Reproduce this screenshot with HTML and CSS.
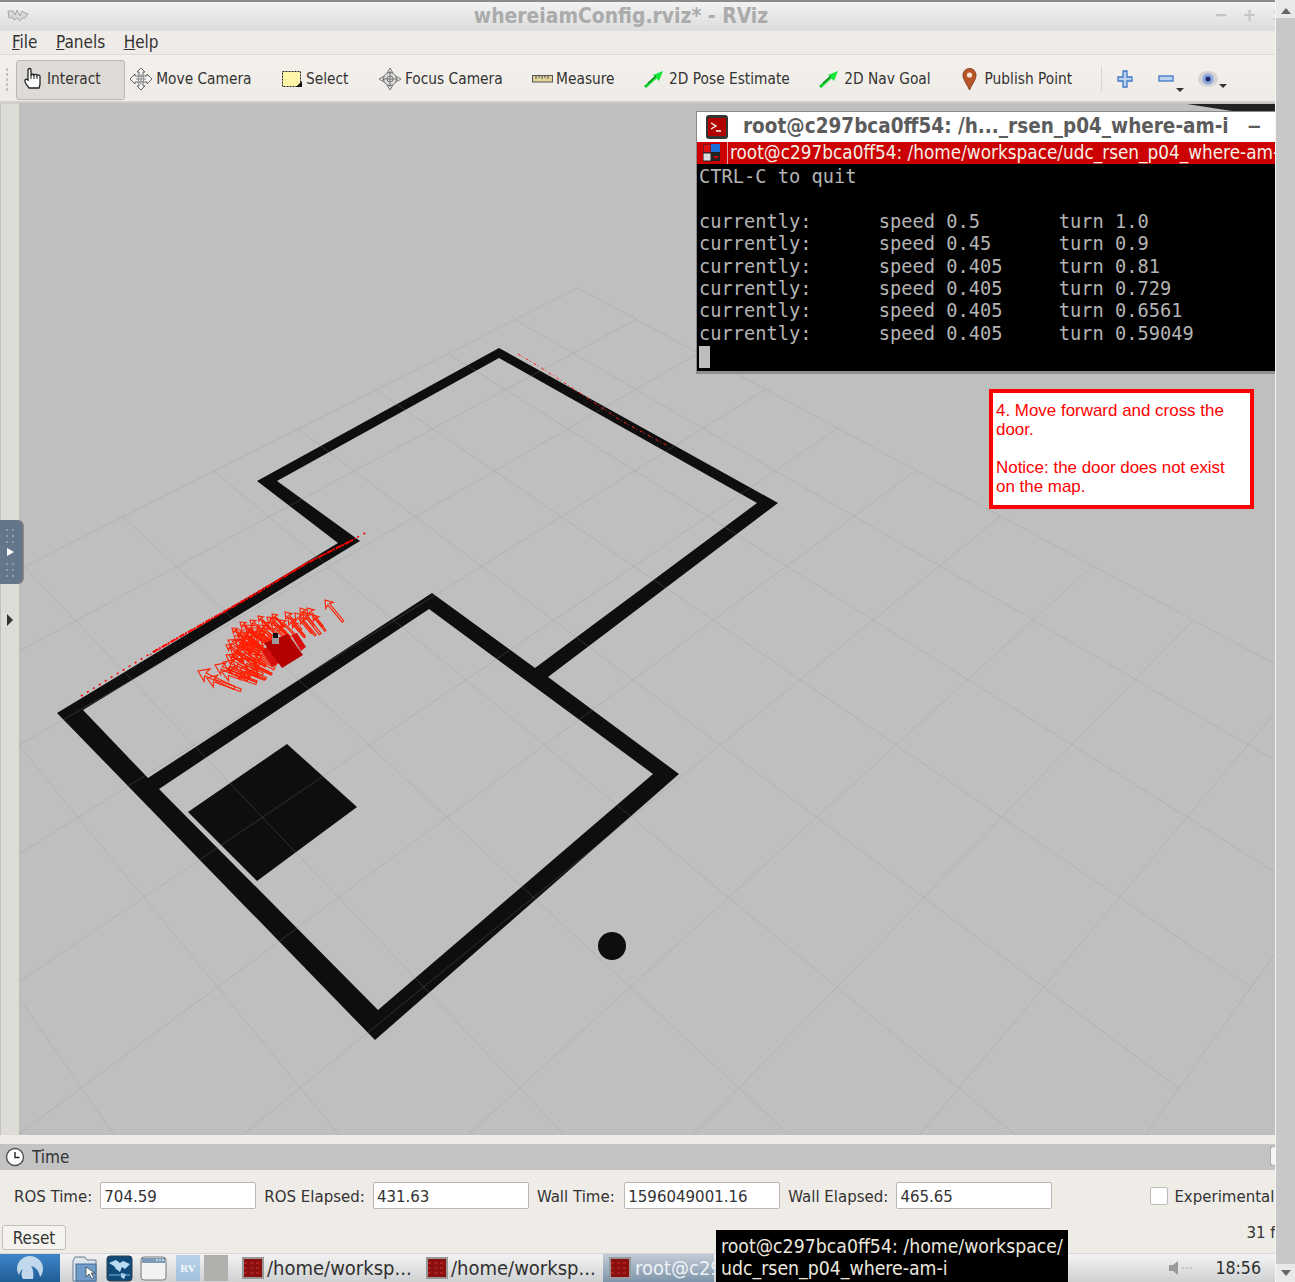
FILE: index.html
```html
<!DOCTYPE html>
<html lang="en">
<head>
<meta charset="utf-8">
<title>whereiamConfig.rviz* - RViz</title>
<link rel="stylesheet" href="styles.css">
</head>
<body>
<div class="screen">
  <div class="desktop">
    <header class="titlebar">
      <svg class="app-logo" width="24" height="16" viewBox="0 0 24 16"><path d="M1 3h5l2 4 2-5 3 6 2-5 3 2 3 1-3 4h-3l-2 3-3-3-3 2-2-3-3 1z" fill="#d8d8d8" stroke="#a5a5a5"/></svg>
      <span class="title-text">whereiamConfig.rviz* - RViz</span>
      <span class="win-btns"><span>−</span><span>+</span><span>×</span></span>
    </header>
    <nav class="menubar">
      <span><u>F</u>ile</span><span><u>P</u>anels</span><span><u>H</u>elp</span>
    </nav>
    <div class="toolbar">
      <span class="grip"></span>
      <div class="tool tool-active">
        <svg width="24" height="26" viewBox="0 0 24 26"><path d="M7 22c-2-3-5-6-4-8 1-1 2-1 3 0V4c0-2 3-2 3 0v5c1-1 3-1 3 0 1-1 3-1 3 .5 1-1 3-.5 3 1V18c0 2-1 3-1 4z" fill="#fff" stroke="#222" stroke-width="1.3"/><path d="M9 9v4M12 9v4M15 9.5V13" stroke="#222" fill="none"/></svg>
        <span>Interact</span>
      </div>
      <div class="tool">
        <svg width="24" height="24" viewBox="0 0 24 24"><path d="M12 1l4 4h-2v4h4V7l5 5-5 5v-2h-4v4h2l-4 4-4-4h2v-4H6v2l-5-5 5-5v2h4V5H8z" fill="#f2f2f2" stroke="#666"/><path d="M12 7v10M7 12h10" stroke="#888"/><circle cx="12" cy="12" r="3" fill="none" stroke="#888"/></svg>
        <span>Move Camera</span>
      </div>
      <div class="tool">
        <svg width="22" height="20" viewBox="0 0 22 20"><rect x="1.5" y="2.5" width="18" height="15" fill="#fdf6a8" stroke="#222" stroke-dasharray="2 1"/><path d="M15 18h6v-6z" fill="#111"/></svg>
        <span>Select</span>
      </div>
      <div class="tool">
        <svg width="24" height="24" viewBox="0 0 24 24"><path d="M12 1l3 5H9zM12 23l-3-5h6zM1 12l5-3v6zM23 12l-5 3V9z" fill="#e8e8e8" stroke="#777"/><circle cx="12" cy="12" r="6.5" fill="#d9d9d9" stroke="#777"/><path d="M12 4v16M4 12h16" stroke="#777"/><circle cx="12" cy="12" r="3" fill="none" stroke="#777"/></svg>
        <span>Focus Camera</span>
      </div>
      <div class="tool">
        <svg width="21" height="10" viewBox="0 0 21 10"><rect x=".5" y="1.5" width="20" height="6.5" fill="#e0d49a" stroke="#555"/><path d="M4 2v3M7 2v2M10 2v3M13 2v2M16 2v3" stroke="#555"/></svg>
        <span>Measure</span>
      </div>
      <div class="tool">
        <svg class="ico-pose" width="20" height="18" viewBox="0 0 20 18"><path d="M1 17L12 7" stroke="#10d030" stroke-width="3"/><path d="M9 5l10-4-4 10z" fill="#14e83a"/><path d="M4 13l8-7" stroke="#0a5a1a"/></svg>
        <span>2D Pose Estimate</span>
      </div>
      <div class="tool">
        <svg class="ico-pose" width="20" height="18" viewBox="0 0 20 18"><path d="M1 17L12 7" stroke="#10d030" stroke-width="3"/><path d="M9 5l10-4-4 10z" fill="#14e83a"/><path d="M4 13l8-7" stroke="#0a5a1a"/></svg>
        <span>2D Nav Goal</span>
      </div>
      <div class="tool tool-pin">
        <svg width="15" height="24" viewBox="0 0 15 24"><path d="M7.500 23C5 17 1 13 1 8a6.500 6.500 0 0 1 13 0c0 5-4 9-6.500 15z" fill="#b8562a" stroke="#8a3d1c"/><circle cx="7.500" cy="8" r="2.600" fill="#f2e6d8"/></svg>
        <span>Publish Point</span>
      </div>
      <span class="tool-sep"></span>
      <div class="mini mini-plus">
        <svg width="16" height="18" viewBox="0 0 16 18"><path d="M6 1h4v6h5v4h-5v6H6v-6H1V7h5z" fill="#bcd2f0" stroke="#3f78c8" stroke-width="1.300"/></svg>
      </div>
      <div class="mini mini-minus">
        <svg width="16" height="8" viewBox="0 0 16 8"><rect x="1" y="1" width="14" height="5" fill="#bcd2f0" stroke="#3f78c8" stroke-width="1.300"/></svg>
        <i class="drop"></i>
      </div>
      <div class="mini mini-eye">
        <svg width="22" height="18" viewBox="0 0 22 18"><ellipse cx="11" cy="9" rx="10" ry="8" fill="#d4d4d4"/><circle cx="11" cy="9" r="5.500" fill="#8ea6e0"/><circle cx="11" cy="9" r="2.500" fill="#1c2a66"/></svg>
        <i class="drop"></i>
      </div>
    </div>
    <main class="workspace">
      <aside class="leftdock">
        <div class="novnc-tab">
          <span class="dots"></span>
          <span class="tab-arrow"></span>
          <span class="dots"></span>
        </div>
        <span class="dock-arrow"></span>
      </aside>
      <div class="viewport">
        <svg class="scene" viewBox="20 103 1255 1032" preserveAspectRatio="none">
          <defs>
            <path id="pose" class="pose-shape" d="M40-1.500H8L10-7 0 0l10 7-2-5.500h32z"/>
          </defs>
          <path class="wall" fill-rule="evenodd" d="M499 348L778 503 548 677 679 774 375 1040 57 713 338 543 257 481zM499 358L277 481 360 541 83 710 148 778 432 593 535 668 757 503zM429 609L159 789 378 1010 653 774z"/>
          <path class="wall" d="M287 744L357 807 257 881 188 812z"/>
          <circle class="wall" cx="612" cy="946" r="14"/>
          <path class="gridline" d="M578 288L1424.200 744.700M515.200 319.600L1372.500 817.100M447.900 353.500L1315.100 897.400M375.600 389.900L1250.900 987.200M297.800 429L1178.800 1088.200M213.900 471.300L1097 1202.600M123 517L1003.600 1333.200M24.200 566.700L896 1483.900M-83.500 620.900L770.400 1659.600M-201.400 680.300L622.100 1867M-331 745.500L444.400 2115.700"/>
          <path class="gridline" d="M578 288L-331 745.500M636.200 319.400L-290.200 817.400M698.700 353.100L-244.900 897.500M765.700 389.300L-194.300 986.900M838 428.300L-137.400 1087.500M916 470.500L-72.800 1201.600M1000.600 516.100L1 1332M1092.700 565.800L86.200 1482.600M1193 620L185.700 1658.400M1303.100 679.400L303.300 1866.200M1424.200 744.700L444.500 2115.800"/>
          <path class="scan scan-dense" d="M153 652L257 593 307 563 353 540"/>
          <path class="scan scan-mid" d="M150 655L260 590 310 561 358 537"/>
          <path class="scan scan-sparse" d="M81 696L120 672 153 652M345 544L367 532"/>
          <path class="scan scan-far" d="M518 354L540 367 580 393 620 420 668 446"/>
          <g class="poses">
            <use href="#pose" transform="translate(198 671) rotate(25) scale(1)"/>
            <use href="#pose" transform="translate(207 678) rotate(20) scale(.9)"/>
            <use href="#pose" transform="translate(223 662) rotate(22) scale(.95)"/>
            <use href="#pose" transform="translate(222 672) rotate(18) scale(.9)"/>
            <use href="#pose" transform="translate(215 665) rotate(24) scale(.9)"/>
            <use href="#pose" transform="translate(230 647) rotate(35) scale(.85)"/>
            <use href="#pose" transform="translate(226 655) rotate(30) scale(.9)"/>
            <use href="#pose" transform="translate(235 640) rotate(35) scale(.8)"/>
            <use href="#pose" transform="translate(240 632) rotate(38) scale(.8)"/>
            <use href="#pose" transform="translate(245 625) rotate(40) scale(.7)"/>
            <use href="#pose" transform="translate(232 660) rotate(25) scale(.85)"/>
            <use href="#pose" transform="translate(240 668) rotate(22) scale(.7)"/>
            <use href="#pose" transform="translate(238 650) rotate(30) scale(.8)"/>
            <use href="#pose" transform="translate(246 645) rotate(30) scale(.8)"/>
            <use href="#pose" transform="translate(250 655) rotate(30) scale(.7)"/>
            <use href="#pose" transform="translate(255 635) rotate(35) scale(.7)"/>
            <use href="#pose" transform="translate(248 636) rotate(40) scale(.7)"/>
            <use href="#pose" transform="translate(258 625) rotate(40) scale(.7)"/>
            <use href="#pose" transform="translate(267 617) rotate(40) scale(.6)"/>
            <use href="#pose" transform="translate(262 628) rotate(40) scale(.6)"/>
            <use href="#pose" transform="translate(272 625) rotate(45) scale(.5)"/>
            <use href="#pose" transform="translate(270 618) rotate(45) scale(.6)"/>
            <use href="#pose" transform="translate(280 620) rotate(45) scale(.5)"/>
            <use href="#pose" transform="translate(288 618) rotate(48) scale(.6)"/>
            <use href="#pose" transform="translate(295 613) rotate(50) scale(.65)"/>
            <use href="#pose" transform="translate(300 617) rotate(50) scale(.6)"/>
            <use href="#pose" transform="translate(307 608) rotate(50) scale(.6)"/>
            <use href="#pose" transform="translate(303 612) rotate(52) scale(.7)"/>
            <use href="#pose" transform="translate(313 615) rotate(52) scale(.5)"/>
            <use href="#pose" transform="translate(325 600) rotate(50) scale(.7)"/>
            <use href="#pose" transform="translate(256 646) rotate(30) scale(.6)"/>
            <use href="#pose" transform="translate(262 650) rotate(28) scale(.5)"/>
            <use href="#pose" transform="translate(242 660) rotate(25) scale(.7)"/>
            <use href="#pose" transform="translate(250 664) rotate(25) scale(.6)"/>
            <use href="#pose" transform="translate(268 635) rotate(35) scale(.5)"/>
            <use href="#pose" transform="translate(236 630) rotate(35) scale(.6)"/>
            <use href="#pose" transform="translate(244 638) rotate(30) scale(.6)"/>
            <use href="#pose" transform="translate(252 628) rotate(35) scale(.6)"/>
            <use href="#pose" transform="translate(260 638) rotate(35) scale(.55)"/>
            <use href="#pose" transform="translate(228 640) rotate(32) scale(.6)"/>
            <use href="#pose" transform="translate(232 628) rotate(40) scale(.45)"/>
            <use href="#pose" transform="translate(240 622) rotate(40) scale(.5)"/>
            <use href="#pose" transform="translate(250 620) rotate(40) scale(.5)"/>
            <use href="#pose" transform="translate(258 616) rotate(45) scale(.45)"/>
            <use href="#pose" transform="translate(226 645) rotate(30) scale(.5)"/>
            <use href="#pose" transform="translate(234 636) rotate(30) scale(.55)"/>
            <use href="#pose" transform="translate(242 643) rotate(30) scale(.5)"/>
            <use href="#pose" transform="translate(250 632) rotate(35) scale(.5)"/>
            <use href="#pose" transform="translate(262 622) rotate(40) scale(.5)"/>
            <use href="#pose" transform="translate(272 614) rotate(45) scale(.45)"/>
            <use href="#pose" transform="translate(279 626) rotate(45) scale(.4)"/>
            <use href="#pose" transform="translate(234 652) rotate(25) scale(.6)"/>
            <use href="#pose" transform="translate(244 654) rotate(28) scale(.6)"/>
            <use href="#pose" transform="translate(252 644) rotate(30) scale(.5)"/>
            <use href="#pose" transform="translate(256 656) rotate(25) scale(.55)"/>
            <use href="#pose" transform="translate(228 668) rotate(22) scale(.6)"/>
            <use href="#pose" transform="translate(236 674) rotate(20) scale(.55)"/>
            <use href="#pose" transform="translate(246 672) rotate(22) scale(.5)"/>
            <use href="#pose" transform="translate(254 666) rotate(25) scale(.45)"/>
            <use href="#pose" transform="translate(238 640) rotate(25) scale(.45)"/>
            <use href="#pose" transform="translate(246 629) rotate(35) scale(.45)"/>
            <use href="#pose" transform="translate(266 640) rotate(30) scale(.4)"/>
            <use href="#pose" transform="translate(257 631) rotate(35) scale(.4)"/>
            <use href="#pose" transform="translate(229 655) rotate(25) scale(.4)"/>
            <use href="#pose" transform="translate(240 645) rotate(30) scale(.35)"/>
            <use href="#pose" transform="translate(249 649) rotate(30) scale(.35)"/>
            <use href="#pose" transform="translate(244 633) rotate(35) scale(.35)"/>
            <use href="#pose" transform="translate(292 622) rotate(50) scale(.5)"/>
            <use href="#pose" transform="translate(285 612) rotate(48) scale(.6)"/>
            <use href="#pose" transform="translate(300 608) rotate(52) scale(.55)"/>
          </g>
          <path class="bot-wheel" d="M262 651l6-5 11 17-7 4zM291 635l6-2 9 14-5 4z"/>
          <path class="bot-body" d="M264 643L288 634 303 655 282 668z"/>
          <path class="bot-mast" d="M272 636h7v8h-7z"/>
          <path class="bot-cap" d="M273 633h5v5h-5z"/>
        </svg>
      </div>
      <section class="terminal">
        <span class="term-shadow"></span>
        <div class="term-title">
          <svg width="24" height="26" viewBox="0 0 24 26"><rect x="1" y="1" width="22" height="24" rx="3" fill="#333"/><rect x="3" y="4" width="18" height="18" fill="#b00000"/><path d="M6 9l5 3-5 3M11 17h5" stroke="#fff" fill="none" stroke-width="1.300"/></svg>
          <span class="term-name">root@c297bca0ff54: /h..._rsen_p04_where-am-i</span>
          <span class="term-min">−</span>
        </div>
        <div class="term-tab">
          <svg width="18" height="18" viewBox="0 0 18 18"><rect x="0" y="0" width="8" height="9" fill="#dd1111" stroke="#222"/><rect x="8" y="0" width="9" height="8" fill="#1a6fd8"/><rect x="0" y="9" width="8" height="8" fill="#ddd" stroke="#222"/><rect x="8" y="8" width="9" height="9" fill="#222"/><path d="M10 12h6l-3 3z" fill="#d00"/></svg>
          <span class="term-path">root@c297bca0ff54: /home/workspace/udc_rsen_p04_where-am-i</span>
        </div>
        <pre class="term-body">CTRL-C to quit

currently:      speed 0.5       turn 1.0
currently:      speed 0.45      turn 0.9
currently:      speed 0.405     turn 0.81
currently:      speed 0.405     turn 0.729
currently:      speed 0.405     turn 0.6561
currently:      speed 0.405     turn 0.59049
<span class="cursor"></span></pre>
      </section>
      <aside class="note">4. Move forward and cross the door.<br><br>Notice: the door does not exist on the map.</aside>
    </main>
    <div class="splitter"><span></span></div>
    <div class="panel-head">
      <svg width="20" height="20" viewBox="0 0 20 20"><circle cx="10" cy="10" r="8.500" fill="#fff" stroke="#555" stroke-width="1.500"/><path d="M10 5v5.500h4.500" stroke="#222" stroke-width="1.400" fill="none"/></svg>
      <span>Time</span>
      <i class="head-edge"></i>
    </div>
    <div class="time-row">
      <label>ROS Time:</label><span class="field">704.59</span>
      <label>ROS Elapsed:</label><span class="field">431.63</span>
      <label>Wall Time:</label><span class="field field-wall">1596049001.16</span>
      <label>Wall Elapsed:</label><span class="field">465.65</span>
      <span class="check"></span><label class="check-label">Experimental</label>
    </div>
    <div class="reset-row">
      <button class="reset" type="button">Reset</button>
      <span class="fps">31 fps</span>
    </div>
    <footer class="taskbar">
      <div class="start">
        <svg width="32" height="28" viewBox="0 0 32 28"><path d="M16 2a13 13 0 0 1 13 13c0 3-1 6-3 8-1-6-4-10-9-11 2 3 3 7 2 13H9c-2-3-2-7 0-10-2 1-3 3-4 6-1-2-2-4-2-6A13 13 0 0 1 16 2z" fill="#dbe9f6" fill-opacity=".85"/></svg>
      </div>
      <div class="launchers">
        <svg width="28" height="27" viewBox="0 0 28 27"><path d="M2 6l2-4h10l2 3h9v21H2z" fill="#dfe5ec" stroke="#6b7f95"/><rect x="5" y="9" width="20" height="17" fill="#6f9cc8" stroke="#3f6a98"/><path d="M15 12v10l3-3 3 5 2-1-3-5h4z" fill="#fff" stroke="#333" stroke-width=".7"/></svg>
        <svg width="27" height="27" viewBox="0 0 27 27"><rect x="1" y="1" width="25" height="25" rx="3" fill="#0f4a78" stroke="#2c3e4e"/><path d="M3 8l7-3 4 3 3-2 7 3-5 5-3-2-2 5-4-3-2-3zM15 18l5 1-2 5-3-2z" fill="#b9dcf2"/><path d="M3 20h21" stroke="#7ab8e0"/></svg>
        <svg width="27" height="27" viewBox="0 0 27 27"><rect x="1" y="2" width="25" height="23" rx="3" fill="#f2f2f2" stroke="#777"/><path d="M2 3h23v5H2z" fill="#7d9ab8"/><path d="M16 5h2M19 5h2M22 5h2" stroke="#fff"/></svg>
        <div class="thumb"><span>RV</span></div>
        <span class="thumb-blank"></span>
      </div>
      <div class="task">
        <svg width="22" height="22" viewBox="0 0 22 22"><rect x="1" y="1" width="20" height="20" fill="#8c0f0f" stroke="#999" stroke-width="2"/><path d="M2 6h18M2 11h18M2 16h18" stroke="#c83030" stroke-dasharray="3 3"/></svg>
        <span>/home/worksp...</span>
      </div>
      <div class="task">
        <svg width="22" height="22" viewBox="0 0 22 22"><rect x="1" y="1" width="20" height="20" fill="#8c0f0f" stroke="#999" stroke-width="2"/><path d="M2 6h18M2 11h18M2 16h18" stroke="#c83030" stroke-dasharray="3 3"/></svg>
        <span>/home/worksp...</span>
      </div>
      <div class="task task-active">
        <svg width="22" height="22" viewBox="0 0 22 22"><rect x="1" y="1" width="20" height="20" fill="#8c0f0f" stroke="#999" stroke-width="2"/><path d="M2 6h18M2 11h18M2 16h18" stroke="#c83030" stroke-dasharray="3 3"/></svg>
        <span>root@c29</span>
      </div>
      <div class="tray">
        <svg width="26" height="16" viewBox="0 0 26 16"><path d="M1 5h4l5-4v14l-5-4H1z" fill="#9a9a9a"/><path d="M14 8h2M18 8h2M22 8h2" stroke="#aaa"/></svg>
        <span class="clock">18:56</span>
      </div>
    </footer>
    <div class="tooltip">root@c297bca0ff54: /home/workspace/<br>udc_rsen_p04_where-am-i</div>
  </div>
  <div class="scrollbar">
    <i class="sb-up"></i>
    <span class="sb-thumb"></span>
    <i class="sb-down"></i>
  </div>
</div>
</body>
</html>
```
FILE: styles.css
```css
* { box-sizing: border-box; }
html, body { margin: 0; padding: 0; height: 100%; overflow: hidden; }
body { font-family: "DejaVu Sans Condensed", "DejaVu Sans", sans-serif; font-stretch: condensed; color: #2e2e2e; background: #efece8; }
svg { flex-shrink: 0; }

.screen { display: flex; width: 1295px; height: 1282px; }
.desktop { position: relative; width: 1275px; height: 1282px; display: flex; flex-direction: column; overflow: hidden; background: #efece8; }

.titlebar { flex: 0 0 31px; display: flex; align-items: center; justify-content: center; position: relative; border-top: 2px solid #8c8c8c; background: linear-gradient(#f2f2f2, #dcdcdc); padding: 0 33px 2px 0; }
.app-logo { position: absolute; left: 7px; top: 6px; }
.title-text { font-size: 20.9px; font-weight: 700; color: #ababab; }
.win-btns { position: absolute; right: -10px; top: 2px; display: flex; gap: 15px; color: #c4c4c4; font-size: 18px; font-weight: 700; }

.menubar { flex: 0 0 23px; display: flex; align-items: center; gap: 18.500px; padding: 0 0 1px 12px; font-size: 17px; color: #333; background: #efece8; }

.toolbar { flex: 0 0 49px; display: flex; align-items: center; gap: 29.500px; position: relative; padding: 2px 0 0 22px; font-size: 15.300px; color: #333; background: linear-gradient(#f4f1ec, #efece7); border-top: 1px solid #dcd9d4; border-bottom: 2px solid #d3d0cb; }
.grip { position: absolute; left: 5px; top: 12px; width: 4px; height: 26px; background-image: radial-gradient(#c4c2bd 1px, transparent 1px); background-size: 4px 5px; }
.tool { display: flex; align-items: center; gap: 3px; }
.tool-active { position: relative; z-index: 0; gap: 0; margin-right: -7px; }
.tool-active svg { margin-right: 1px; }
.tool-active::before { content: ""; position: absolute; z-index: -1; left: -6px; top: -6px; width: 107px; height: 38px; background: #dedbd6; border: 1px solid #bbb8b3; border-radius: 3px; }
.tool-active + .tool { margin-left: 6px; }
.tool-pin { gap: 7.500px; margin-left: 2px; }
.ico-pose { margin-right: 2px; }
.tool-sep { width: 1px; height: 26px; background: #d8d5d0; margin-left: -1px; }
.mini { position: relative; display: flex; align-items: center; }
.mini-plus { margin-left: -14px; }
.mini-minus { margin-left: -5px; }
.mini-eye { margin-left: -6px; }
.drop { position: absolute; right: -10px; top: 13px; width: 0; height: 0; border-left: 4px solid transparent; border-right: 4px solid transparent; border-top: 4px solid #333; }
.mini-eye .drop { right: -8px; top: 14px; }

.workspace { flex: 0 0 1032px; position: relative; display: flex; background: #dcdad5; }
.leftdock { flex: 0 0 20px; position: relative; background: #dedcd7; border-left: 1px solid #c4c2bd; border-right: 1px solid #bcbab5; border-top: 1px solid #cfcdc8; }
.viewport { flex: 1; position: relative; overflow: hidden; background: #bfbfbf; }
.scene { display: block; width: 100%; height: 100%; }

.gridline { fill: none; stroke: #909090; stroke-opacity: .27; stroke-width: 1; }
.wall { fill: #0e0e0e; }
.scan { fill: none; stroke: #f00; }
.scan-dense { stroke-width: 2; stroke-dasharray: 6 1 2 1; }
.scan-mid { stroke-width: 1; stroke-dasharray: 2 3; }
.scan-sparse { stroke-width: 1.600; stroke-dasharray: 2 5; }
.scan-far { stroke: #f22; stroke-width: 1; stroke-dasharray: 3 2 1 3; }
.poses { fill: none; stroke: #ff1e00; stroke-width: 1.100; }
.pose-shape { vector-effect: non-scaling-stroke; }
.bot-wheel { fill: #d80f0f; }
.bot-body { fill: #b30000; }
.bot-mast { fill: #9b9b9b; }
.bot-cap { fill: #111; }

.novnc-tab { position: absolute; left: -1px; top: 416px; width: 22px; height: 64px; z-index: 3; display: flex; flex-direction: column; align-items: center; justify-content: center; gap: 5px; padding-right: 4px; background: #647689; border-radius: 0 6px 6px 0; box-shadow: 1px 0 0 #7a7a7a, 2px 0 0 #8a8a8a; }
.dots { width: 10px; height: 16px; background-image: radial-gradient(#8c9cac 1.500px, transparent 1.500px); background-size: 6px 6px; }
.tab-arrow { width: 0; height: 0; border-top: 4px solid transparent; border-bottom: 4px solid transparent; border-left: 7px solid #fff; margin-left: 2px; }
.dock-arrow { position: absolute; left: 6px; top: 510px; width: 0; height: 0; border-top: 6px solid transparent; border-bottom: 6px solid transparent; border-left: 6px solid #333; }

.terminal { position: absolute; left: 696px; top: 8px; width: 579px; height: 263px; z-index: 2; display: flex; flex-direction: column; background: #000; border: 1px solid #8a8a8a; border-right: 0; border-bottom: 3px solid #8f8f8f; }
.term-shadow { position: absolute; left: 490px; top: -8px; width: 90px; height: 7px; background: #222; clip-path: polygon(0 0, 100% 0, 100% 100%, 50% 100%); }
.term-title { flex: 0 0 30px; display: flex; align-items: center; padding-left: 8px; background: #fff; color: #5c5c5c; white-space: nowrap; overflow: hidden; }
.term-name { margin: 0 0 3px 14px; font-size: 20.500px; font-weight: 700; }
.term-min { margin: 0 0 3px 18px; font-size: 20px; font-weight: 700; }
.term-tab { flex: 0 0 22px; display: flex; align-items: center; gap: 6px; padding-left: 6px; background: #cc0000; color: #f4f0e8; font-size: 18.800px; white-space: nowrap; overflow: hidden; }
.term-path { border-left: 1px solid #e8a0a0; padding-left: 2px; line-height: 22px; }
.term-body { flex: 1; margin: 0; padding: 2px 0 0 2px; font-family: "DejaVu Sans Mono", monospace; font-stretch: normal; font-size: 18.680px; line-height: 22.400px; color: #b4b4b4; background: #000; overflow: hidden; }
.cursor { display: inline-block; width: 11px; height: 22px; background: #bdbdbd; vertical-align: top; margin-top: 1px; }

.note { position: absolute; left: 989px; top: 286px; width: 265px; height: 120px; z-index: 2; padding: 8px 3px 0 3px; background: #fff; border: 4px solid #f00; color: #f00; font-family: "Liberation Sans", Arial, sans-serif; font-stretch: normal; font-size: 16.950px; line-height: 19px; }

.splitter { flex: 0 0 9px; display: flex; justify-content: center; align-items: center; background: #efece8; }
.splitter span { width: 22px; height: 2px; background-image: radial-gradient(#c4c2bd 1px, transparent 1px); background-size: 4px 2px; }

.panel-head { flex: 0 0 26px; display: flex; align-items: center; gap: 7px; position: relative; padding: 0 0 1px 5px; background: #c3c3c3; font-size: 17px; color: #333; }
.head-edge { position: absolute; right: 0; top: 2px; width: 5px; height: 20px; background: #f4f4f4; border: 1px solid #aaa; border-right: 0; border-radius: 3px 0 0 3px; }

.time-row { flex: 0 0 55px; display: flex; align-items: center; padding: 0 0 4px 14px; font-size: 16.700px; color: #333; white-space: nowrap; overflow: hidden; }
.field { flex: 0 0 156px; height: 27px; margin: 0 8px; padding: 0 3px; display: flex; align-items: center; background: #fff; border: 1px solid #b9b7b2; border-radius: 2px; }
.field-wall { margin-left: 9.500px; }
.check { flex: 0 0 18px; height: 18px; margin-left: 90px; background: #fff; border: 1px solid #bdbbb6; border-radius: 2px; }
.check-label { margin-left: 6px; }

.reset-row { flex: 0 0 28px; display: flex; align-items: flex-start; justify-content: space-between; padding-left: 2px; overflow: hidden; white-space: nowrap; }
.reset { width: 64px; height: 25px; padding: 0; font-family: inherit; font-stretch: condensed; font-size: 17px; color: #333; background: #f5f3ef; border: 1px solid #c2c0bb; border-radius: 3px; }
.fps { font-size: 16.700px; margin-right: -18px; margin-top: -3px; color: #333; }

.taskbar { flex: 0 0 29px; display: flex; align-items: center; background: linear-gradient(#f3f3f3, #cfd1d2); border-top: 1px solid #d8d8d8; border-bottom: 2px solid #2d4a4a; font-size: 20px; color: #303030; white-space: nowrap; }
.start { flex: 0 0 60px; height: 100%; display: flex; align-items: center; justify-content: center; background: linear-gradient(#3f86c8, #1f5c96); }
.launchers { flex: 0 0 182px; display: flex; align-items: center; gap: 7px; padding-left: 11px; }
.thumb { width: 24px; height: 26px; margin-left: 2px; background: linear-gradient(#bcd4ea, #a0bfdc); color: #f4f8fc; font: 700 11px "Liberation Serif", serif; display: flex; align-items: center; justify-content: center; }
.thumb-blank { width: 24px; height: 26px; margin-left: -3px; background: #b2b0ac; }
.task { flex: 0 0 184px; display: flex; align-items: center; gap: 3px; }
.taskbar > .task-active { flex: 0 0 111px; overflow: hidden; margin-left: -7px; height: 100%; padding-left: 6px; gap: 4px; background: linear-gradient(#c2ccd6, #7f95aa); color: #eef3f8; }
.tray { flex: 0 0 559px; display: flex; align-items: center; justify-content: flex-end; gap: 21px; padding-right: 12px; font-size: 17.600px; }

.tooltip { position: absolute; left: 716px; top: 1230px; width: 352px; height: 52px; z-index: 5; padding: 6px 0 0 5px; background: #000; color: #ece8df; font-size: 19.300px; line-height: 21.500px; white-space: nowrap; }

.scrollbar { flex: 0 0 20px; display: flex; flex-direction: column; align-items: center; background: #e9e9e9; border-left: 1px solid #f6f6f6; }
.sb-up { width: 0; height: 0; margin: 8px 0 4px; border-left: 5px solid transparent; border-right: 5px solid transparent; border-bottom: 6px solid #666; }
.sb-thumb { flex: 1; width: 100%; background: #c8c8c8; }
.sb-down { width: 0; height: 0; margin: 6px 0 6px; border-left: 5px solid transparent; border-right: 5px solid transparent; border-top: 6px solid #666; }
```
